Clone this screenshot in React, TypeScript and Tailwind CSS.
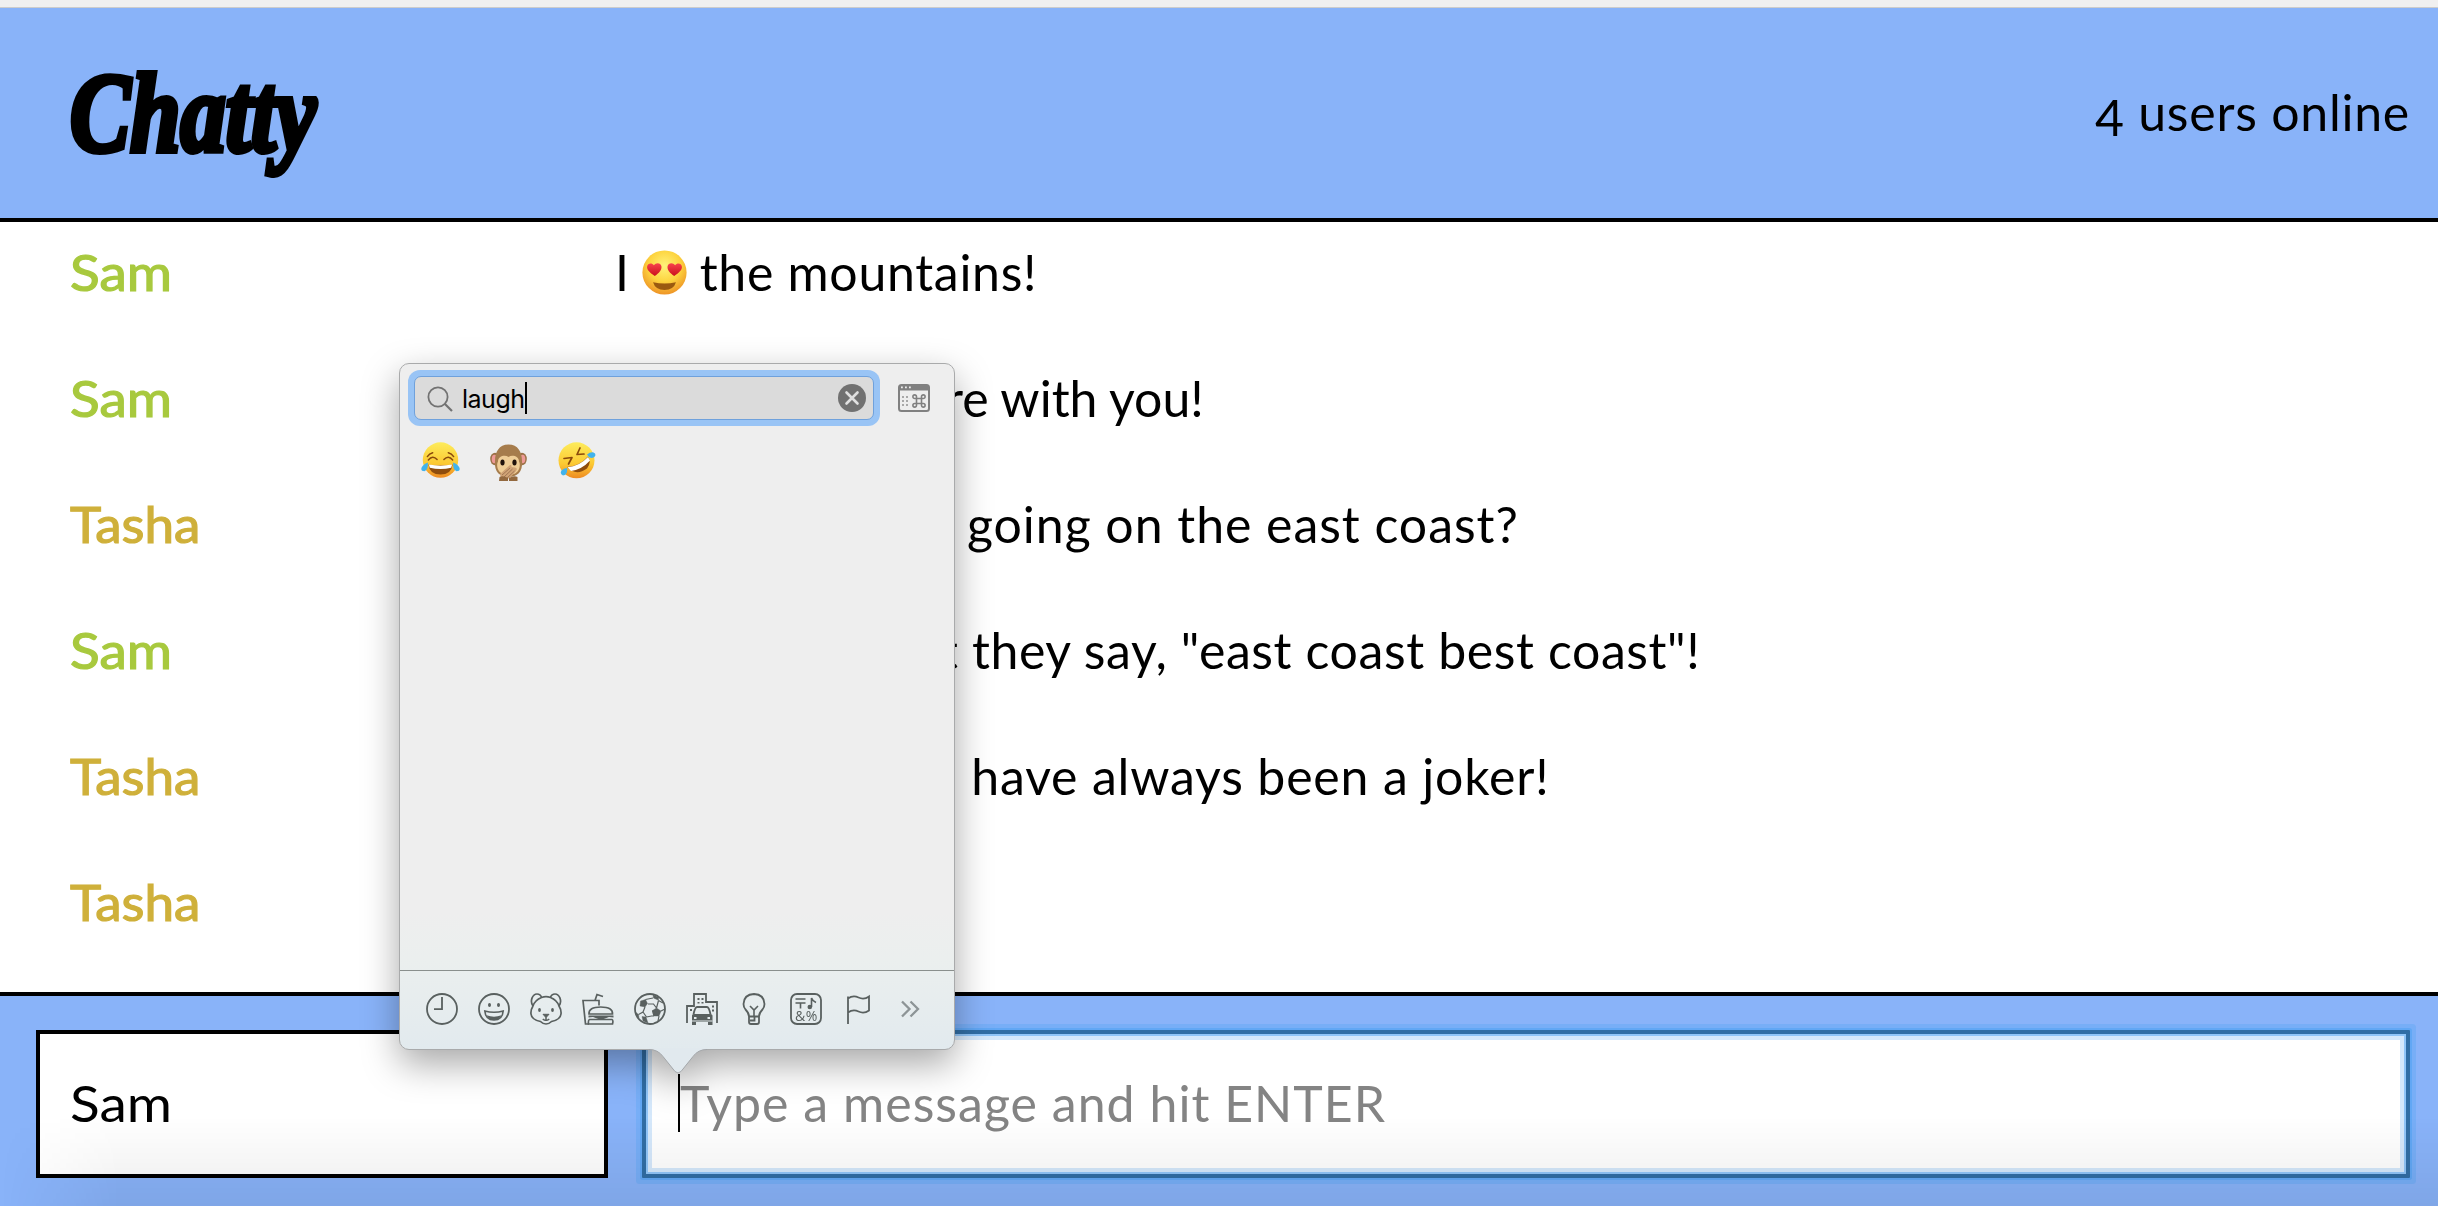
import type { ReactNode } from "react";

type Message = {
  user: string;
  color: string;
  lead?: string;
  leadClass?: string;
  text: ReactNode;
  textClass?: string;
};

function HeartEyes() {
  return (
    <svg viewBox="0 0 44 44" className="mr-[13px] ml-[12px] -mt-[12px] inline-block size-[45px] align-middle">
      <defs>
        <radialGradient id="heFace" cx="50%" cy="35%" r="65%">
          <stop offset="0" stopColor="#fff27a" />
          <stop offset=".55" stopColor="#fdd43f" />
          <stop offset="1" stopColor="#ee9426" />
        </radialGradient>
        <linearGradient id="heHeart" x1="0" x2="0" y1="0" y2="1">
          <stop offset="0" stopColor="#f8434c" />
          <stop offset="1" stopColor="#c9101c" />
        </linearGradient>
      </defs>
      <circle cx="22" cy="22" r="21.6" fill="url(#heFace)" />
      <path d="M12.500 25.500C8 22.500 4.500 19.500 5 16.200C5.500 12.800 9.700 12 11.600 15C13.600 12 18.300 12.400 19 15.800C19.600 19.300 16.500 22.500 12.500 25.500Z" fill="url(#heHeart)" />
      <path d="M31.500 25.500C27.500 22.500 24.400 19.300 25 15.800C25.700 12.400 30.400 12 32.400 15C34.300 12 38.500 12.800 39 16.200C39.500 19.500 36 22.500 31.500 25.500Z" fill="url(#heHeart)" />
      <path d="M10.800 31.500Q22 34 33.200 31.500Q31 39 22 39Q13 39 10.800 31.500Z" fill="#9a5a10" />
    </svg>
  );
}

const messages: Message[] = [
  {
    user: "Sam",
    color: "text-[#a8c93e]",
    text: (
      <>
        I<HeartEyes />the mountains!
      </>
    ),
    textClass: "tracking-[0.7px]",
  },
  { user: "Sam", color: "text-[#a8c93e]", lead: "I wish you we", leadClass: "w-[330px]", text: "re with you!" },
  {
    user: "Tasha",
    color: "text-[#cfb03a]",
    lead: "What's ",
    leadClass: "w-[352px]",
    text: "going on the east coast?",
    textClass: "tracking-[0.95px]",
  },
  {
    user: "Sam",
    color: "text-[#a8c93e]",
    lead: "You know wha",
    leadClass: "w-[325px]",
    text: 't they say, "east coast best coast"!',
    textClass: "tracking-[0.6px]",
  },
  {
    user: "Tasha",
    color: "text-[#cfb03a]",
    lead: "Haha Sam, yo",
    leadClass: "w-[314px]",
    text: "u have always been a joker!",
    textClass: "tracking-[0.82px]",
  },
  { user: "Tasha", color: "text-[#cfb03a]", text: "" },
];

const nameScale: Record<string, string> = {
  Sam: "scale-x-[1.1]",
  Tasha: "scale-x-[1.06]",
};

function JoyEmoji() {
  return (
    <svg viewBox="0 0 40 38" className="h-[37px] w-[39px]">
      <defs>
        <linearGradient id="joyFace" x1="0" x2="0" y1="0" y2="1">
          <stop offset="0" stopColor="#fdec5c" />
          <stop offset=".6" stopColor="#fcc932" />
          <stop offset="1" stopColor="#ee8a22" />
        </linearGradient>
      </defs>
      <circle cx="20" cy="18.500" r="18.200" fill="url(#joyFace)" />
      <path d="M7.500 18.500q4.500-5.500 9-.500M23.500 18q4.500-5 9 .500M6.500 15q2-3 5.500-4M28 11q3.500 1 5.500 4" fill="none" stroke="#8a4a0c" strokeWidth="1.500" strokeLinecap="round" />
      <path d="M7.500 23Q20 25.500 32.500 23Q31 33.500 20 33.500Q9 33.500 7.500 23Z" fill="#8f4d0d" />
      <path d="M8 23.200Q20 25.500 32 23.200L31 26.500Q20 29 9 26.500Z" fill="#fff" />
      <path d="M7 21Q7.500 29 3.500 30Q-.500 30 .500 26.500Q2 23 7 21ZM33 21Q32.500 29 36.500 30Q40.500 30 39.500 26.500Q38 23 33 21Z" fill="#41b3ec" />
    </svg>
  );
}

function MonkeyEmoji() {
  return (
    <svg viewBox="0 0 37 37" className="h-[37px] w-[37px]">
      <ellipse cx="5" cy="15" rx="4.800" ry="6.200" fill="#9a7147" />
      <ellipse cx="32" cy="15" rx="4.800" ry="6.200" fill="#9a7147" />
      <ellipse cx="4.500" cy="15" rx="2.800" ry="4.300" fill="#ee9a97" />
      <ellipse cx="32.500" cy="15" rx="2.800" ry="4.300" fill="#ee9a97" />
      <path d="M18.500 .500C28 .500 32 8 32 17C33 28 27 33 18.500 33C10 33 4 28 5 17C5 8 9 .500 18.500 .500Z" fill="#a67c4c" />
      <path d="M18.500 13C22 10.500 29 12 29 17.500C31 21 30 31 18.500 31C7 31 6 21 8 17.500C8 12 15 10.500 18.500 13Z" fill="#efcd96" />
      <ellipse cx="12.500" cy="18.500" rx="2.100" ry="3" fill="#20130c" />
      <ellipse cx="24.500" cy="18.500" rx="2.100" ry="3" fill="#20130c" />
      <path d="M10 30L20 21Q22 20.500 21.500 23L25 23.500Q28 24 26 27L19.500 34.500H11Z" fill="#d0a375" />
      <path d="M12 31l8-7M14 33l8.500-8M17 34l7.500-7" stroke="#94694a" strokeWidth=".8" />
      <path d="M9.500 33Q13 31 18 34V37H9ZM19 34Q24 31 27.500 33V37H19Z" fill="#93693f" />
    </svg>
  );
}

function RoflEmoji() {
  return (
    <svg viewBox="0 0 38 37" className="h-[37px] w-[38px]">
      <circle cx="18.500" cy="18.300" r="18" fill="url(#joyFace)" />
      <path d="M6 16.500l8-1-3.500 6.500M22 6l-3 6.500 7-.500" fill="none" stroke="#8a4a0c" strokeWidth="1.700" strokeLinecap="round" strokeLinejoin="round" />
      <path d="M9 25Q21 24.500 30 14.500Q34 20 29 26.500Q18 34.500 9 25Z" fill="#8f4d0d" />
      <path d="M9.500 25.200Q21 24.500 30 15L32 18.500Q24 27.500 13 29Z" fill="#fff" />
      <path d="M9 26Q10 33 5 33.500Q1.500 32 3.500 28.500Q5.500 26 9 26ZM29 12.500Q34 8.500 37 11.500Q38.500 15 34 16Q31 16 29 12.500Z" fill="#41b3ec" />
    </svg>
  );
}

function Icon({ children }: { children: ReactNode }) {
  return (
    <svg viewBox="0 0 32 32" className="size-8 shrink-0" fill="none" stroke="#59605f" strokeWidth="1.800">
      {children}
    </svg>
  );
}

function CategoryBar() {
  return (
    <div className="flex h-[79px] gap-5 border-t border-[#8a8f8d] pt-[22px] pl-[26px]">
      <Icon>
        <circle cx="16" cy="16" r="15" />
        <path d="M16 4v12.200H8" />
      </Icon>
      <Icon>
        <circle cx="16" cy="16" r="15" />
        <ellipse cx="11.500" cy="12" rx="1.500" ry="2" fill="#59605f" stroke="none" />
        <ellipse cx="20.500" cy="12" rx="1.500" ry="2" fill="#59605f" stroke="none" />
        <path d="M6.800 18Q16 20.500 25.200 18Q24.500 27 16 27Q7.500 27 6.800 18Z" strokeWidth="1.600" />
        <path d="M8.500 22.300Q16 25 23.500 22.300Q21.500 27 16 27Q10.500 27 8.500 22.300Z" fill="#59605f" stroke="none" />
      </Icon>
      <Icon>
        <path d="M3 13C-.500 8 2.500 1 7 1Q10.500 1 11.500 4.500Q16 2.800 20.500 4.500Q21.500 1 25 1C29.500 1 32.500 8 29 13Q31.500 17 31 21Q30.500 26.500 21.500 28.500Q19 31 16 31Q13 31 10.500 28.500Q1.500 26.500 1 21Q.500 17 3 13M11.500 4.500Q5 7 3 13M20.500 4.500Q27 7 29 13" strokeWidth="1.700" />
        <ellipse cx="9.500" cy="17" rx="1.400" ry="2" fill="#59605f" stroke="none" />
        <ellipse cx="22.500" cy="17" rx="1.400" ry="2" fill="#59605f" stroke="none" />
        <path d="M13 21.300h6L16.500 24h-1Z" fill="#59605f" strokeWidth="1" />
        <path d="M16 24v3M12.800 26q1.700 1.800 3.200 1 1.500.800 3.200-1" strokeWidth="1.500" />
      </Icon>
      <Icon>
        <path d="M17 12.500V7.500H1L3.500 31H7M13 7.500L15 1.500l6 2" strokeWidth="1.700" />
        <path d="M7 21Q6.500 14 18.700 14Q31 14 30.500 21Z" strokeWidth="1.700" />
        <path d="M6.500 22.500H31.500V24.500L27 24l-8 3-8-3-4.500.500Z" fill="#59605f" stroke="none" />
        <path d="M7.500 26.500Q6 27 6.500 31H30.500Q31.500 27 30 26.500Z" strokeWidth="1.700" />
      </Icon>
      <Icon>
        <circle cx="16" cy="16" r="15" />
        <path d="M6.500 8l5-1.500 2 4-2.500 3.500-5-1ZM18.500 17.500l4-2.500 4.500 3-2 5h-5ZM19 1.700l5.500 2.500v3L19.500 5ZM1.500 19l3 2.500.500 3.500-2.500-2.500ZM8 23.500l4 .500 2 6-5-2Z" fill="#59605f" strokeWidth=".4" />
        <path d="M11.500 6.500L19 5M24.500 7.500L22.500 15M24.500 7.500L29 10M14 11h5.500l3 4M11 14L9 19l-4.500 2.500M9 19l3.500 5M12.500 24l5-1h2.500M20 23l-1.500-5.500M27 18l4-2M25 23l-1 5" strokeWidth="1.200" />
      </Icon>
      <Icon>
        <path d="M1 30V13h7V1h12v8h11v21" />
        <path d="M11.500 5h2v2h-2zM15.500 5h2v2h-2zM11.500 9h2v1.500h-2zM15.500 9h2v1.500h-2zM4 16h2v2H4zM26 12.500h2v2h-2zM26 16.500h2v2h-2z" fill="#59605f" stroke="none" />
        <path d="M7.500 21.500Q9 14 11 14h10Q23 14 24.500 21.500" />
        <path d="M6 22.500Q6 21 8 21h16q2.500 0 2.500 1.500V32h-4.500v-3H10v3H6Z" fill="#59605f" stroke="none" />
        <path d="M8 24h2.500v2H8zM21.500 24H24v2h-2.500z" fill="#e4ebed" stroke="none" />
        <path d="M5.500 28h21" stroke="#e4ebed" strokeWidth="1" />
      </Icon>
      <Icon>
        <path d="M11 23.500Q11 20 7.500 16.500Q5.500 14 5.500 11Q6 1.300 16 1Q26 1.300 26.500 11Q26.500 14 24.500 16.500Q21 20 21 23.500ZM11 23.500V29q0 2 2 2h6q2 0 2-2v-5.500M12 27.500h4.500v-3" />
        <path d="M12 13l4 4 4-4M16 17v6" strokeWidth="1.600" />
      </Icon>
      <Icon>
        <rect x="1" y="1" width="30" height="30" rx="6" />
        <path d="M5.500 6h10M5.500 10h10M10.500 10v5.500" strokeWidth="1.600" />
        <path d="M21.500 14V5q1 3 4.500 4.500" strokeWidth="1.600" />
        <circle cx="19.800" cy="14" r="2.300" fill="#59605f" stroke="none" />
        <text x="5" y="28" fontSize="14" fill="#59605f" stroke="none" fontFamily="Open Sans, sans-serif">&amp;</text>
        <text x="15.800" y="28" fontSize="14" fill="#59605f" stroke="none" fontFamily="Open Sans, sans-serif">%</text>
      </Icon>
      <Icon>
        <path d="M6 3.500v27.500M6 5.500Q11 2 16.500 4.500Q22 7 27 3.500V17.500Q22 21 16.500 18.500Q11 16 6 19.500" />
      </Icon>
      <Icon>
        <path d="M8 8.500l7.500 7.500L8 23.500M16.500 8.500L24 16l-7.500 7.500" stroke="#8d9496" strokeWidth="2.300" />
      </Icon>
    </div>
  );
}

function EmojiPicker() {
  return (
    <div className="absolute top-[363px] left-[399px] w-[556px] drop-shadow-[0_14px_18px_rgba(0,0,0,0.34)]">
      <div className="flex h-[687px] flex-col rounded-[10px] border border-[#a9aaab] bg-[linear-gradient(to_bottom,#eeeeee_80%,#ebefee_87%,#e2eaee_100%)]">
        <div className="flex pt-[6px] pl-2">
          <div className="h-14 w-[472px] rounded-xl bg-[#99c4f5] p-[6px]">
            <div className="flex h-full items-center rounded-[7px] border border-[#6fa1dc] bg-[#dbdbdb] pr-[7px] pl-[12px]">
              <svg viewBox="0 0 26 26" className="mt-[2px] size-[26px]" fill="none" stroke="#727272" strokeWidth="1.800">
                <circle cx="11" cy="11" r="9.600" />
                <path d="M18 18l7 7" strokeWidth="2.200" />
              </svg>
              <span className="mt-[2px] ml-[9px] font-['Inter'] text-[25px] leading-8 tracking-[-0.5px] text-black">laugh</span>
              <span className="h-8 w-[2px] bg-black" />
              <svg viewBox="0 0 28 28" className="ml-auto size-7">
                <circle cx="14" cy="14" r="14" fill="#717171" />
                <path d="M8.500 8.500l11 11M19.500 8.500l-11 11" stroke="#e0e0e0" strokeWidth="2.600" strokeLinecap="round" />
              </svg>
            </div>
          </div>
          <svg viewBox="0 0 32 28" className="mt-[14px] ml-[18px] h-7 w-8">
            <rect x="1" y="1" width="30" height="26" rx="2.500" fill="none" stroke="#808080" strokeWidth="2" />
            <path d="M1 1h30v5.500H1z" fill="#808080" />
            <path d="M3 2.500h1.800v1.800H3zM7 2.500h1.800v1.800H7zM11 2.500h1.800v1.800H11z" fill="#eeeeee" />
            <path d="M4 12h2v2H4zM8 12h2v2H8zM4 16h2v2H4zM8 16h2v2H8zM4 20h2v2H4zM8 20h2v2H8z" fill="#a8a8a8" />
            <path d="M18.500 14.500h5v5h-5zM18.500 14.500h-1.800a1.800 1.800 0 1 1 1.800-1.800zM23.500 14.500v-1.800a1.800 1.800 0 1 1 1.800 1.800zM18.500 19.500v1.800a1.800 1.800 0 1 1-1.800-1.800zM23.500 19.500h1.800a1.800 1.800 0 1 1-1.800 1.800z" fill="none" stroke="#808080" strokeWidth="1.600" />
          </svg>
        </div>
        <div className="flex pt-[16px] pl-[21px]">
          <JoyEmoji />
          <div className="mt-[2px] ml-[30px]">
            <MonkeyEmoji />
          </div>
          <div className="ml-[31px]">
            <RoflEmoji />
          </div>
        </div>
        <div className="flex-1" />
        <CategoryBar />
      </div>
      <svg viewBox="0 0 58 27" className="absolute top-[685px] left-[250px] h-[27px] w-[58px]">
        <path d="M0 0V1.200Q9 1.500 14 8.500L26 23.500Q29 26.500 32 23.500L44 8.500Q49 1.500 58 1.200V0Z" fill="#e1e9ee" />
        <path d="M0 1.500Q9 1.500 14 8.500L26 23.500Q29 26.500 32 23.500L44 8.500Q49 1.500 58 1.500" fill="none" stroke="#a3a6a9" />
      </svg>
    </div>
  );
}

export default function App() {
  return (
    <div className="relative flex h-[1206px] w-[2438px] flex-col overflow-hidden bg-white font-['Lato',sans-serif] text-[50px] leading-[60px] text-black">
      <div className="h-2 border-b border-[#cccccc] bg-[#f0f0f0]" />
      <header className="flex h-[214px] items-center justify-between border-b-4 border-black bg-[#89b3f9] pr-[28px] pl-[70px]">
        <h1 className="origin-left scale-x-[0.8] pb-[2px] font-['Liberation_Serif',serif] text-[113px] leading-none font-bold italic [-webkit-text-stroke:6px_black]">Chatty</h1>
        <div className="pb-[3px] tracking-[0.75px]">
          <span className="inline-block translate-y-[5px]">4</span> users online
        </div>
      </header>

      <main className="flex-1">
        <div className="-mt-3">
          {messages.map((m, i) => (
            <div key={i} className="flex h-[126px] items-center pb-[2px] pl-[70px]">
              <span className={`w-[545px] shrink-0 [-webkit-text-stroke:1.2px_currentColor] ${m.color}`}>
                <span className={`inline-block origin-left ${nameScale[m.user]}`}>{m.user}</span>
              </span>
              <div className="flex whitespace-pre">
                {m.lead && <span className={`shrink-0 text-right ${m.leadClass}`}>{m.lead}</span>}
                <span className={m.textClass}>{m.text}</span>
              </div>
            </div>
          ))}
        </div>
      </main>

      <footer className="relative flex h-[214px] gap-[34px] border-t-4 border-black bg-[#89b3f9] pt-[34px] pr-7 pl-9">
        <div className="flex h-[148px] w-[572px] items-center border-4 border-black bg-white pb-[2px] pl-[30px]">
          <span className="origin-left scale-x-[1.1]">Sam</span>
        </div>
        <div className="flex h-[148px] flex-1 items-center rounded-[1px] border-4 border-[#316ea5] bg-white pb-[2px] pl-8 text-[#848484] shadow-[0_0_0_2px_#61a7f5,0_0_0_6px_#77aef7,inset_0_0_0_2px_#90c5f8,inset_0_0_0_6px_#d5e8fb]">
          <span className="h-[58px] w-[2px] bg-black" />
          <span className="tracking-[1.03px]">Type a message and hit ENTER</span>
        </div>
        <div className="absolute inset-x-0 bottom-0 h-[90px] bg-linear-to-b from-transparent to-[#00000012] mask-[linear-gradient(to_right,transparent,black_120px)]" />
      </footer>

      <EmojiPicker />
    </div>
  );
}
